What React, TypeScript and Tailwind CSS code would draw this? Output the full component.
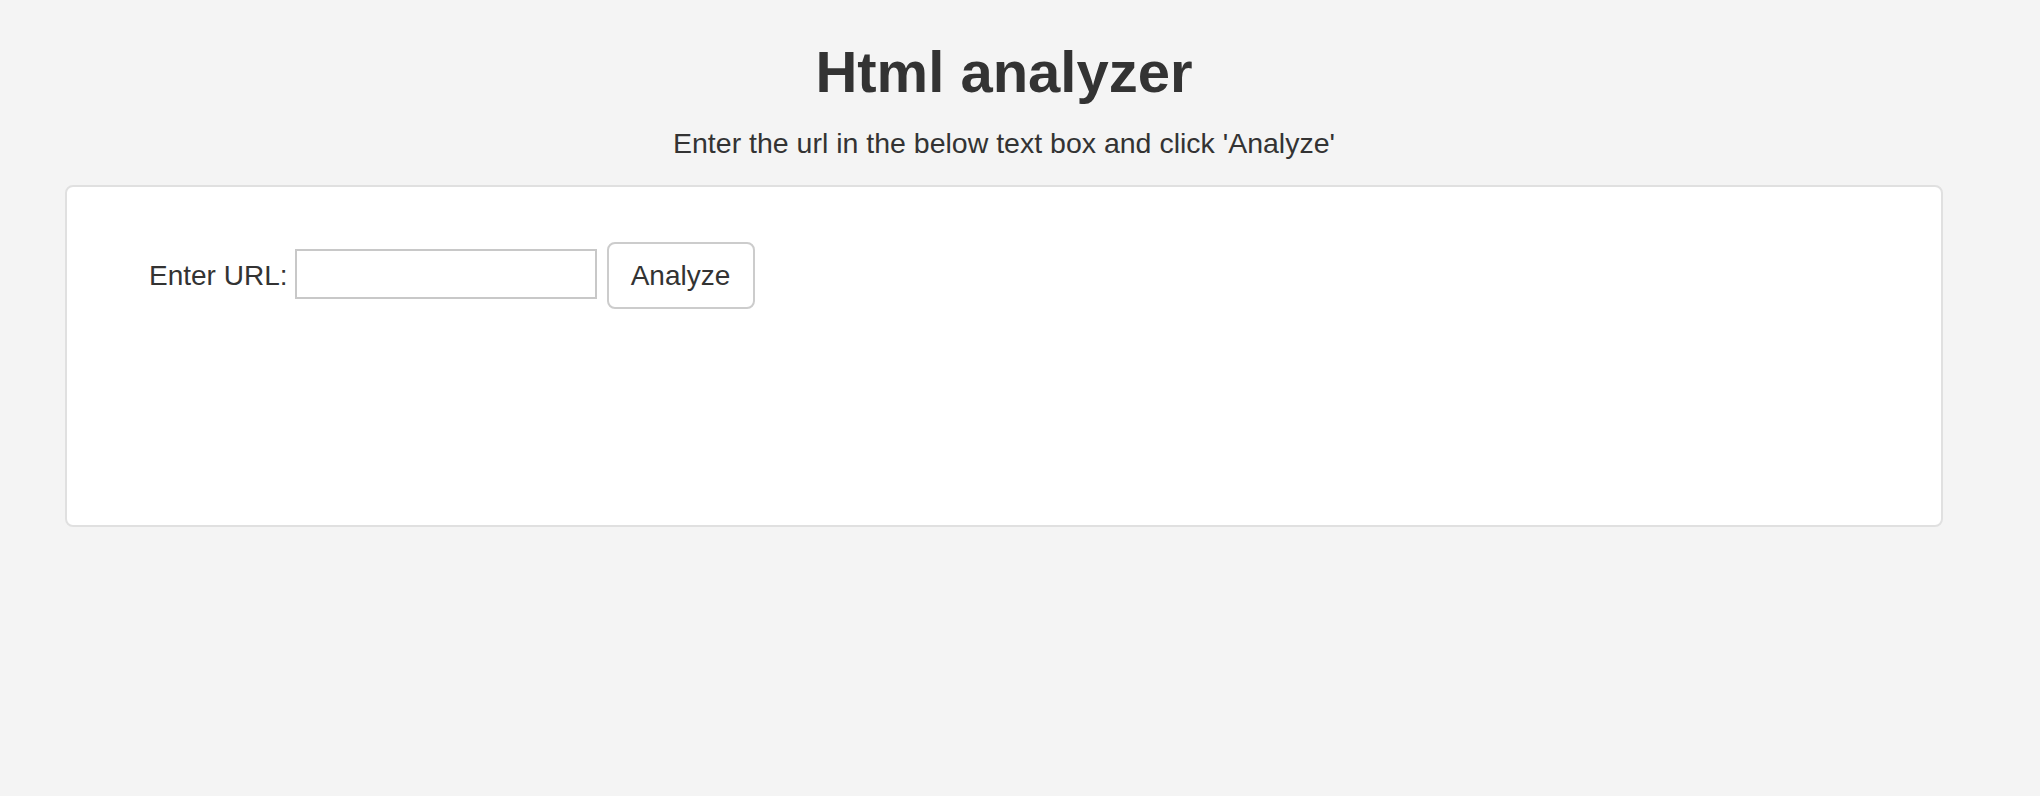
import React from "react";

const App = () => {
  return (
    <div className="min-h-[796px] w-full bg-[#f4f4f4] text-[#333333] font-['Liberation_Sans',Arial,sans-serif]">
      <div className="ml-[65px] w-[1878px] pt-[40px]">
        <h1 className="text-center text-[58px] leading-[64px] font-bold">
          Html analyzer
        </h1>
        <p className="mt-[23px] text-center text-[28.5px] leading-[32px]">
          Enter the url in the below text box and click 'Analyze'
        </p>

        <div className="mt-[26px] h-[342px] rounded-[8px] border-2 border-[#e0e0e0] bg-white pt-[55px] pl-[82px]">
          <form
            className="flex items-center"
            onSubmit={(e) => e.preventDefault()}
          >
            <label htmlFor="url" className="text-[28px] leading-[32px]">
              Enter URL:
            </label>
            <input
              id="url"
              type="text"
              className="ml-[7px] mb-[3px] h-[50px] w-[302px] border-2 border-[#c8c8c8] bg-white px-2 text-[28px] outline-none"
            />
            <button
              type="submit"
              className="ml-[10px] h-[67px] w-[148px] rounded-[8px] border-2 border-[#cccccc] bg-white text-[28px] leading-[32px] text-[#333333]"
            >
              Analyze
            </button>
          </form>
        </div>
      </div>
    </div>
  );
};

export default App;
